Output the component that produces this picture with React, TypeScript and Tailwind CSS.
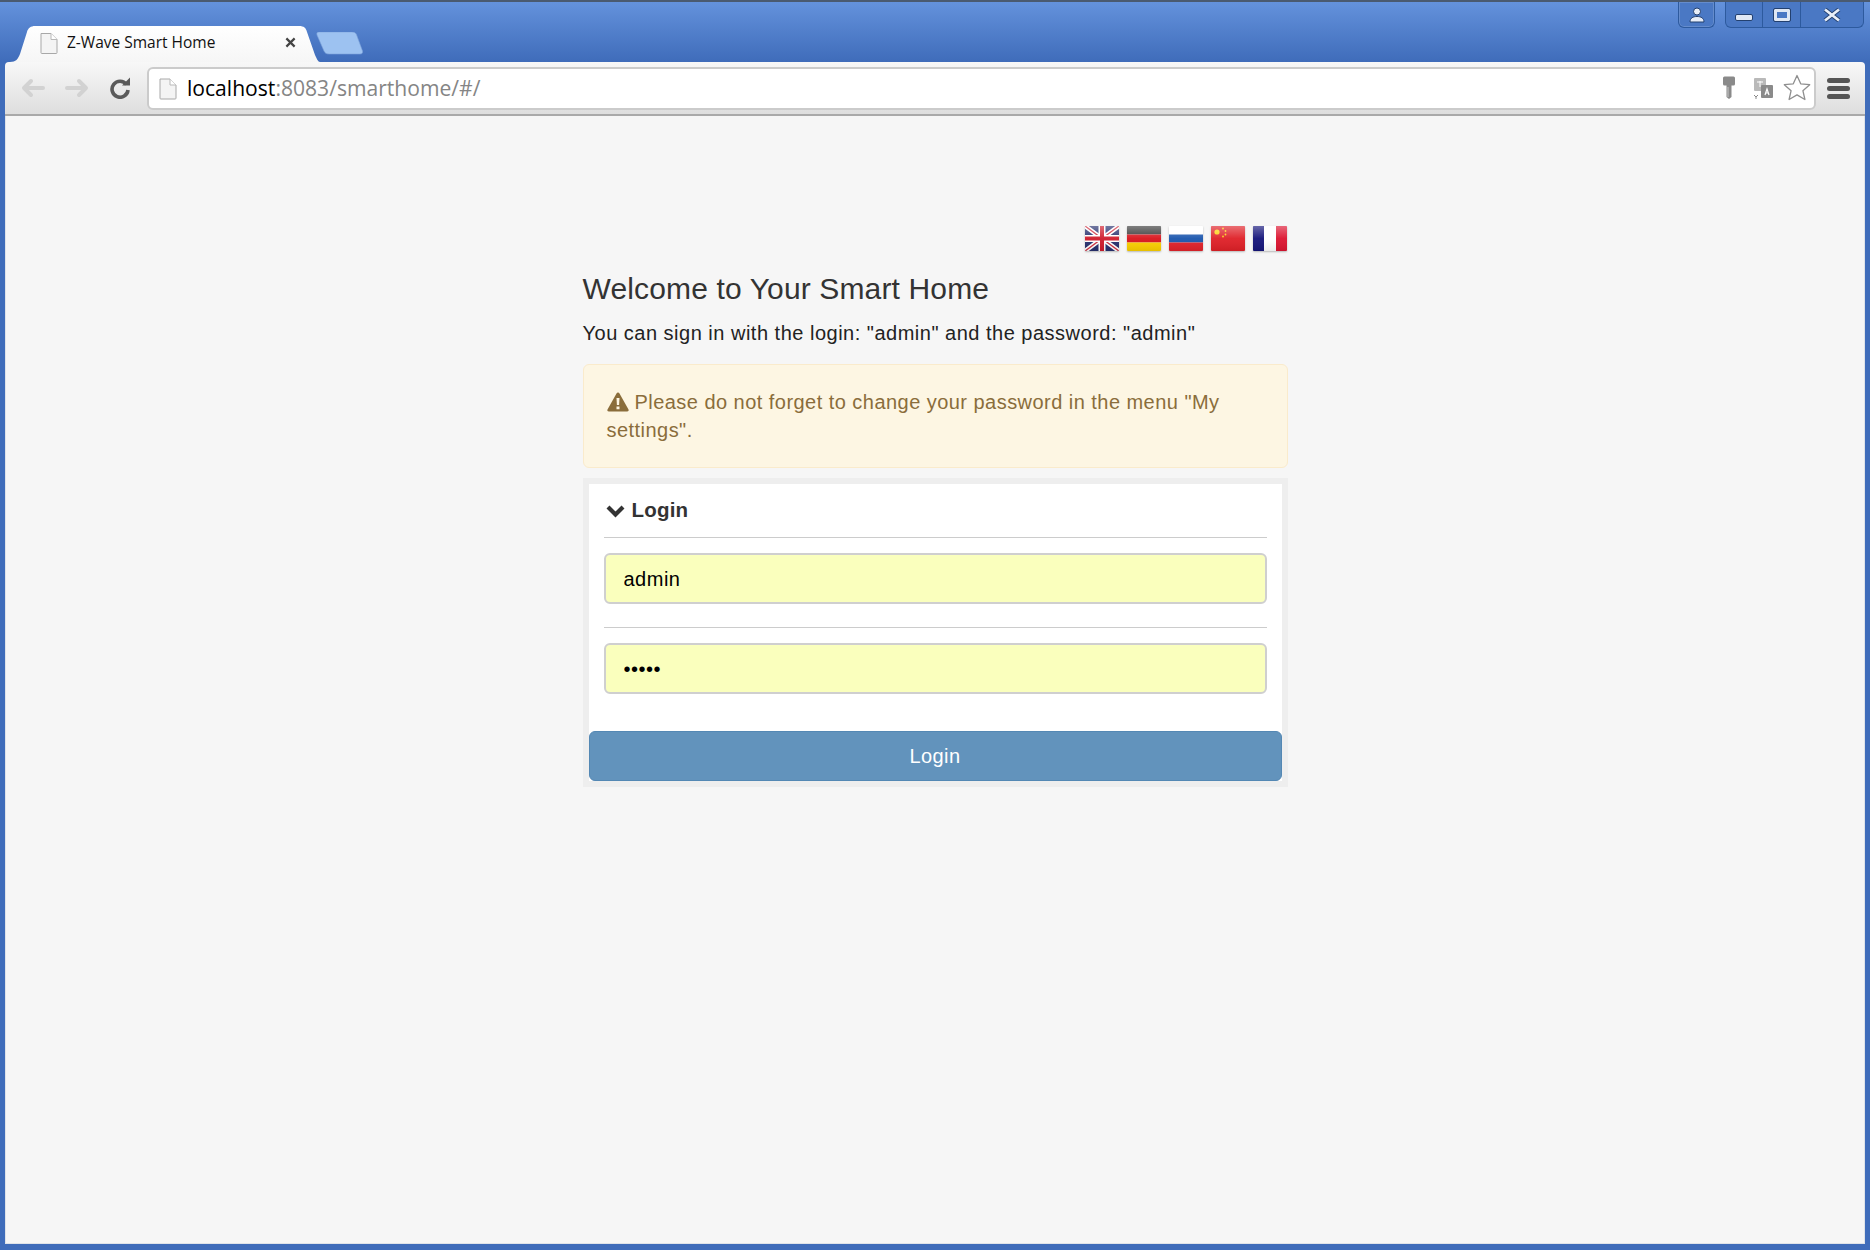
import React from "react";

const sans = "font-['Liberation_Sans',Arial,sans-serif]";

function PageIcon({ className }: { className: string }) {
  return (
    <svg viewBox="0 0 18 22" className={className}>
      <path d="M1 1.500h10l6 6v13.200a.8.8 0 0 1-.8.8H1.800a.8.8 0 0 1-.8-.8z" fill="#f4f4f4" stroke="#a8a8a8" />
      <path d="M11 1.500v6h6" fill="#fff" stroke="#b8b8b8" />
    </svg>
  );
}

function ArrowIcon({ flip }: { flip?: boolean }) {
  return (
    <svg viewBox="0 0 24 20" className={`w-6 h-5 ${flip ? "-scale-x-100" : ""}`}>
      <path d="M10 3 3 10l7 7M3.500 10H22" fill="none" stroke="#d2d2d2" strokeWidth="4" strokeLinecap="round" strokeLinejoin="round" />
    </svg>
  );
}

function WindowControls() {
  return (
    <div className="flex items-start pr-[6px] gap-[10px]">
      <div className="w-[37px] h-[26px] rounded-b-[6px] border border-t-0 border-[#2d5a9e] bg-[#4a78c4] shadow-[inset_0_0_0_1px_rgba(255,255,255,0.15)] flex items-center justify-center">
        <svg viewBox="0 0 16 16" className="w-[16px] h-[16px]">
          <circle cx="8" cy="4.500" r="3.500" fill="#e8eef8" stroke="#23406f" />
          <path d="M1 15c0-4 3.200-5.500 7-5.500s7 1.500 7 5.500z" fill="#e8eef8" stroke="#23406f" />
        </svg>
      </div>
      <div className="w-[139px] h-[26px] rounded-b-[6px] border border-t-0 border-[#2d5a9e] bg-[#4a78c4] flex divide-x divide-[#2d5a9e]">
        <div className="w-[37px] flex items-center justify-center">
          <div className="w-[18px] h-[7px] mt-[6px] rounded-[2px] bg-[#dfe7f4] border border-[#23406f]" />
        </div>
        <div className="w-[38px] flex items-center justify-center">
          <div className="w-[16px] h-[12px] rounded-[1px] border-[3px] border-[#dfe7f4] outline outline-[#23406f]" />
        </div>
        <div className="flex-1 flex items-center justify-center">
          <svg viewBox="0 0 18 14" className="w-[18px] h-[14px]">
            <path d="M2 1.500 16 12.500M16 1.500 2 12.500" stroke="#23406f" strokeWidth="4.500" />
            <path d="M2 1.500 16 12.500M16 1.500 2 12.500" stroke="#e8eef8" strokeWidth="2.800" />
          </svg>
        </div>
      </div>
    </div>
  );
}

function TabStrip() {
  return (
    <div className="h-[60px] flex justify-between bg-gradient-to-b from-[#6492dc] to-[#3f6cba]">
      <div className="flex items-end pl-[10px]">
        <div className="relative w-[310px] h-[36px] flex items-center pl-[30px] pr-[24px] pb-[3px]">
          <svg viewBox="0 0 310 36" className="absolute inset-0 w-[310px] h-[36px]">
            <defs>
              <linearGradient id="tabBg" x1="0" y1="0" x2="0" y2="1">
                <stop offset="0" stopColor="#ffffff" />
                <stop offset="1" stopColor="#f6f6f6" />
              </linearGradient>
            </defs>
            <path d="M0 36C6 36 8 33 10 28L17 6C18 2 21 0 25 0H289C294 0 296 2 297 6L305 29C307 33 308 36 310 36Z" fill="url(#tabBg)" />
          </svg>
          <PageIcon className="relative w-[18px] h-[22px] shrink-0" />
          <span className="relative ml-[9px] flex-1 text-[15.500px] text-[#111] font-['Open_Sans',sans-serif]">Z-Wave Smart Home</span>
          <svg viewBox="0 0 12 12" className="relative w-[11px] h-[11px]">
            <path d="M1.500 1.500l9 9M10.500 1.500l-9 9" stroke="#444" strokeWidth="2.400" />
          </svg>
        </div>
        <svg viewBox="0 0 47 23" className="w-[47px] h-[23px] mb-[7px] -ml-[4px]">
          <path d="M3 0H36C39 0 40 1 41 4L46.500 19C47 21 46 22 44 22H13C10 22 9 21 8 19L1 3C0.500 1 1 0 3 0Z" fill="#9dc2f1" stroke="#7da3da" strokeWidth="0.600" />
        </svg>
      </div>
      <WindowControls />
    </div>
  );
}

function Toolbar() {
  return (
    <div className="h-[54px] rounded-t-[4px] border-b-2 border-[#a9a9a9] bg-gradient-to-b from-[#f8f8f8] to-[#dedede] flex items-center pl-[16px] pr-[15px]">
      <ArrowIcon />
      <div className="w-5" />
      <ArrowIcon flip />
      <svg viewBox="0 0 22 22" className="w-[22px] h-[22px] ml-[20px] mr-[16px]">
        <path d="M17.500 7.500A8 8 0 1 0 19 13" fill="none" stroke="#5a5a5a" strokeWidth="3.600" />
        <path d="M13 8.500h8v-8z" fill="#5a5a5a" />
      </svg>
      <div className="flex-1 h-[43px] rounded-[6px] border-2 border-[#cbcbcb] bg-white flex items-center pl-[10px] pr-[3px]">
        <PageIcon className="w-[18px] h-[23px] shrink-0" />
        <span className="ml-[10px] flex-1 text-[21.100px] text-[#000] font-['Open_Sans',sans-serif]">
          localhost<span className="text-[#858585]">:8083/smarthome/#/</span>
        </span>
        <svg viewBox="0 0 16 24" className="w-4 h-6 mr-[16px]">
          <path d="M2 2a1.500 1.500 0 0 1 1.500-1.500h9A1.500 1.500 0 0 1 14 2v6a1.500 1.500 0 0 1-1.500 1.500H10.500V21L8 23l-2.500-2V9.500h-2A1.500 1.500 0 0 1 2 8z" fill="#8a8a8a" />
          <path d="M7 11v10" stroke="#c8c8c8" />
        </svg>
        <svg viewBox="0 0 21 23" className="w-[21px] h-[23px] mr-[9px]">
          <rect x="1" y="1" width="12" height="13" rx="1" fill="#b9b9b9" />
          <rect x="8" y="8" width="12" height="13" rx="1" fill="#8a8a8a" />
          <path d="M12 18l2-6 2 6M12.800 16h2.400" fill="none" stroke="#fff" strokeWidth="1.200" />
          <path d="M4 5h6M7 4v6" stroke="#fff" />
          <path d="M1 18l2 2 2-2M3 22v-2" fill="none" stroke="#8a8a8a" />
        </svg>
        <svg viewBox="0 0 28 28" className="w-[28px] h-[28px]">
          <path d="M14 1.500l3.700 8.300 9 .9-6.800 6 2 8.800-7.900-4.600-7.900 4.600 2-8.800-6.800-6 9-.9z" fill="#fff" stroke="#8f8f8f" strokeWidth="1.300" strokeLinejoin="round" />
        </svg>
      </div>
      <div className="w-[23px] ml-[11px] flex flex-col gap-[3px]">
        <div className="h-[5px] rounded-full bg-[#555]" />
        <div className="h-[5px] rounded-full bg-[#555]" />
        <div className="h-[5px] rounded-full bg-[#555]" />
      </div>
    </div>
  );
}

function Flag({ id, children }: { id: string; children: React.ReactNode }) {
  return (
    <svg viewBox="0 0 34 25" className="w-[34px] h-[25px] rounded-[1px] shadow-[0_1px_2px_rgba(0,0,0,0.25)]">
      <defs>
        <linearGradient id={id} x1="0" y1="0" x2="0" y2="1">
          <stop offset="0" stopColor="#fff" stopOpacity="0.35" />
          <stop offset="0.5" stopColor="#fff" stopOpacity="0.05" />
          <stop offset="1" stopColor="#000" stopOpacity="0.08" />
        </linearGradient>
      </defs>
      {children}
      <rect width="34" height="25" fill={`url(#${id})`} />
    </svg>
  );
}

function Flags() {
  return (
    <div className="flex justify-end gap-2 pr-[1px]">
      <Flag id="fUk">
        <rect width="34" height="25" fill="#27306e" />
        <path d="M0 0l34 25M34 0L0 25" stroke="#fff" strokeWidth="4.500" />
        <path d="M0 0l34 25M34 0L0 25" stroke="#cf2f3f" strokeWidth="1.400" />
        <path d="M17 0v25M0 12.500h34" stroke="#fff" strokeWidth="7" />
        <path d="M17 0v25M0 12.500h34" stroke="#cf1b2b" strokeWidth="4" />
      </Flag>
      <Flag id="fDe">
        <rect width="34" height="8.500" fill="#3a3a3a" />
        <rect y="8.500" width="34" height="8" fill="#d8141c" />
        <rect y="16.500" width="34" height="8.500" fill="#fbd000" />
      </Flag>
      <Flag id="fRu">
        <rect width="34" height="8.500" fill="#ffffff" />
        <rect y="8.500" width="34" height="8" fill="#1a55ad" />
        <rect y="16.500" width="34" height="8.500" fill="#e2222a" />
      </Flag>
      <Flag id="fCn">
        <rect width="34" height="25" fill="#df2027" />
        <circle cx="6" cy="6" r="2.600" fill="#fcd116" />
        <circle cx="12" cy="2.500" r="0.900" fill="#fcd116" />
        <circle cx="14.500" cy="5" r="0.900" fill="#fcd116" />
        <circle cx="14.500" cy="8.500" r="0.900" fill="#fcd116" />
        <circle cx="12" cy="10.500" r="0.900" fill="#fcd116" />
      </Flag>
      <Flag id="fFr">
        <rect width="11" height="25" fill="#14147a" />
        <rect x="11" width="12" height="25" fill="#ffffff" />
        <rect x="23" width="11" height="25" fill="#dc1430" />
      </Flag>
    </div>
  );
}

function LoginPanel() {
  const inputCls =
    "w-full h-[51px] px-[18px] pt-[1px] rounded-[6px] border-2 border-[#cfcfcf] bg-[#faffbd] text-[20px] tracking-[0.5px] text-black outline-none";
  return (
    <div className="mt-[10px] border-[6px] border-[#eeeeee] bg-white">
      <div className="flex items-center h-[53px] pl-[16px] text-[20.500px] tracking-[0.2px] font-bold text-[#333]">
        <svg viewBox="0 0 20 14" className="w-[21px] h-[14px] mr-[6px]">
          <path d="M2.500 3 10 10.500 17.500 3" fill="none" stroke="#333" strokeWidth="4.200" />
        </svg>
        Login
      </div>
      <div className="px-[15px]">
        <div className="h-[1px] bg-[#cccccc] mb-[15px]" />
        <input type="text" readOnly value="admin" className={inputCls} />
        <div className="h-[1px] bg-[#cccccc] mt-[23px] mb-[15px]" />
        <input type="password" readOnly value="admin" className={inputCls} />
      </div>
      <button className="mt-[37px] block w-full h-[50px] rounded-[6px] border border-[#5488b4] bg-[#6293bc] text-[20px] tracking-[0.4px] text-white">
        Login
      </button>
    </div>
  );
}

export default function App() {
  return (
    <div className={`w-[1870px] h-[1250px] flex flex-col border-t-2 border-[#4a5a70] bg-[#3f6cba] ${sans}`}>
      <TabStrip />
      <div className="flex-1 min-h-0 flex flex-col px-[5px] pb-[6px]">
        <Toolbar />
        <div className="flex-1 bg-[#f6f6f6] border-x border-b border-[#dfe3e9]">
          <div className="w-[705px] mx-auto pt-[110px]">
            <Flags />
            <h1 className="mt-[21px] text-[30px] leading-[33px] tracking-[0.14px] text-[#333]">Welcome to Your Smart Home</h1>
            <p className="mt-[14px] text-[20px] leading-[28px] tracking-[0.5px] text-[#222]">
              You can sign in with the login: "admin" and the password: "admin"
            </p>
            <div className="mt-[17px] h-[104px] rounded-[6px] border border-[#faebcc] bg-[#fdf6e3] px-[23px] py-[23px] text-[20px] leading-[28px] tracking-[0.46px] text-[#8a6d3b]">
              <svg viewBox="0 0 22 20" className="inline-block w-[22px] h-[20px] mr-[6px] -mt-[4px] align-middle">
                <path d="M11 0.500c.700 0 1.200.400 1.500 1L21.500 17.500c.500 1-.200 2-1.300 2H1.800c-1.100 0-1.800-1-1.300-2L9.500 1.500c.300-.600.800-1 1.500-1z" fill="#8a6d3b" />
                <path d="M9.500 6h3l-.4 7h-2.200zM9.500 14.500h3v2.800h-3z" fill="#fdf6e3" />
              </svg>
              Please do not forget to change your password in the menu "My settings".
            </div>
            <LoginPanel />
          </div>
        </div>
      </div>
    </div>
  );
}
